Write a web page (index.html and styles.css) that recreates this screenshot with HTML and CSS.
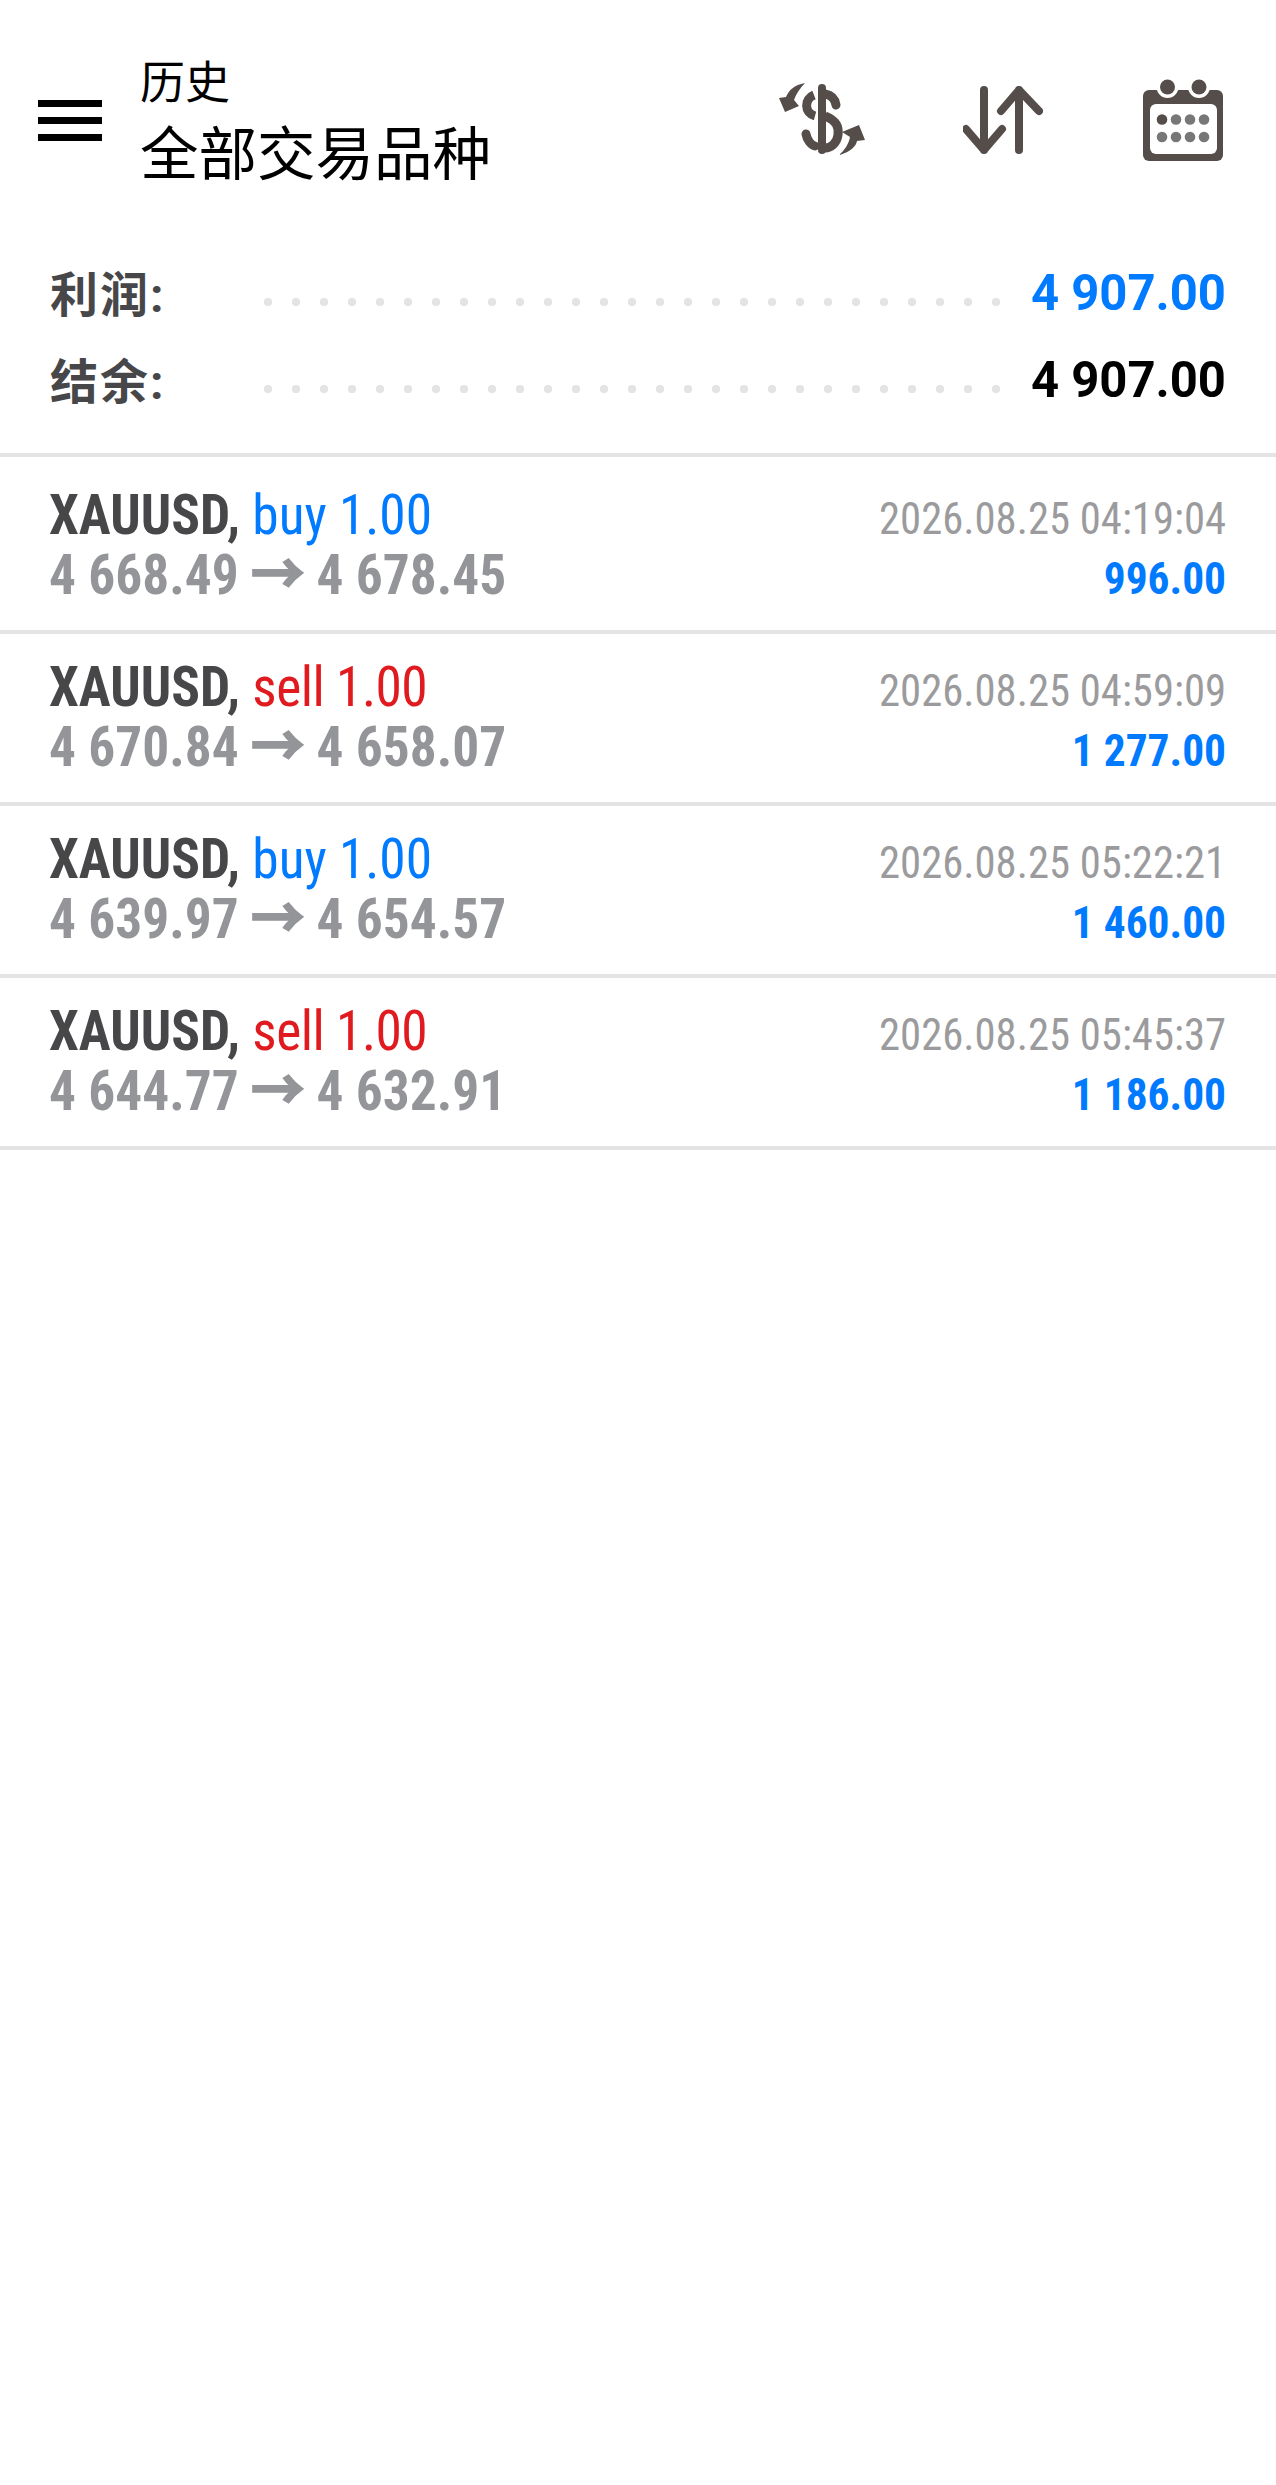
FILE: index.html
```html
<!DOCTYPE html>
<html lang="zh-CN">
<head>
    <meta charset="UTF-8">
    <meta name="viewport" content="width=device-width, initial-scale=1.0">
    <title>历史</title>
    <link rel="stylesheet" href="styles.css">
</head>
<body>
    <header class="toolbar">
        <div class="menu-btn"><span></span><span></span><span></span></div>
        <div class="title">
            <div class="title-small">历史</div>
            <div class="title-big">全部交易品种</div>
        </div>
        <svg class="icon icon-money" viewBox="18 20 86 74">
            <rect x="57" y="21" width="8" height="70" rx="4"/>
            <path class="line" d="M53 32C43 36 43 50 54 53"/>
            <path class="line" d="M64 31C70 32 74 36 75 42" stroke-linecap="round"/>
            <path class="line" d="M64 53C76 58 78 64 77 72C76 80 70 85 64 85"/>
            <path class="line" d="M45 71C46 77 50 82 54 83" stroke-linecap="round"/>
            <path d="M44 20C33 22 28 27 25 34L18 35L24 49L38 43L33 37C35 31 39 25 44 20Z"/>
            <path d="M78 92C90 89 95 83 96 78L104 77L98 62L81 69L89 74C88 80 84 87 78 92Z"/>
        </svg>
        <svg class="icon icon-sort" viewBox="0 0 80 68">
            <path class="line round" d="M21 4V64M3 43L21 64L39 43"/>
            <path class="line round" d="M56 64V4M38 25L56 4L76 25"/>
        </svg>
        <svg class="icon icon-cal" viewBox="13 12 81 84">
            <rect x="13" y="24" width="80" height="71" rx="6"/>
            <circle cx="37.5" cy="21" r="11" fill="#fff"/>
            <circle cx="69" cy="21" r="11" fill="#fff"/>
            <circle cx="37.5" cy="21" r="7.5"/>
            <circle cx="69" cy="21" r="7.5"/>
            <rect x="20" y="38" width="67" height="50" rx="6" fill="#fff"/>
            <circle cx="32" cy="53.5" r="5.3"/>
            <g fill="#777">
                <circle cx="46" cy="53.5" r="5.3"/>
                <circle cx="60" cy="53.5" r="5.3"/>
                <circle cx="74" cy="53.5" r="5.3"/>
                <circle cx="32" cy="71" r="5.3"/>
                <circle cx="46" cy="71" r="5.3"/>
                <circle cx="60" cy="71" r="5.3"/>
                <circle cx="74" cy="71" r="5.3"/>
            </g>
        </svg>
    </header>

    <section class="summary">
        <div class="summary-row">
            <span class="summary-label">利润:</span>
            <span class="dots"></span>
            <span class="summary-value blue">4 907.00</span>
        </div>
        <div class="summary-row">
            <span class="summary-label">结余:</span>
            <span class="dots"></span>
            <span class="summary-value">4 907.00</span>
        </div>
    </section>

    <ul class="deals">
        <li class="deal">
            <div class="deal-left">
                <div class="deal-head"><b>XAUUSD,</b> <span class="blue">buy 1.00</span></div>
                <div class="deal-prices">4 668.49 <span class="arrow">→</span> 4 678.45</div>
            </div>
            <div class="deal-right">
                <div class="deal-time">2026.08.25 04:19:04</div>
                <div class="deal-profit blue">996.00</div>
            </div>
        </li>
        <li class="deal">
            <div class="deal-left">
                <div class="deal-head"><b>XAUUSD,</b> <span class="red">sell 1.00</span></div>
                <div class="deal-prices">4 670.84 <span class="arrow">→</span> 4 658.07</div>
            </div>
            <div class="deal-right">
                <div class="deal-time">2026.08.25 04:59:09</div>
                <div class="deal-profit blue">1 277.00</div>
            </div>
        </li>
        <li class="deal">
            <div class="deal-left">
                <div class="deal-head"><b>XAUUSD,</b> <span class="blue">buy 1.00</span></div>
                <div class="deal-prices">4 639.97 <span class="arrow">→</span> 4 654.57</div>
            </div>
            <div class="deal-right">
                <div class="deal-time">2026.08.25 05:22:21</div>
                <div class="deal-profit blue">1 460.00</div>
            </div>
        </li>
        <li class="deal">
            <div class="deal-left">
                <div class="deal-head"><b>XAUUSD,</b> <span class="red">sell 1.00</span></div>
                <div class="deal-prices">4 644.77 <span class="arrow">→</span> 4 632.91</div>
            </div>
            <div class="deal-right">
                <div class="deal-time">2026.08.25 05:45:37</div>
                <div class="deal-profit blue">1 186.00</div>
            </div>
        </li>
    </ul>
</body>
</html>
```

FILE: styles.css
```css
body {
    margin: 0;
    background: #fff;
    font-family: Roboto, "Noto Sans CJK SC", sans-serif;
}
.blue {
    color: #007aff;
}
.red {
    color: #e01b1f;
    letter-spacing: -0.5px;
}
.toolbar {
    display: flex;
    align-items: center;
    height: 236px;
    padding: 4px 52px 0 38px;
    box-sizing: border-box;
}
.menu-btn {
    display: flex;
    flex-direction: column;
    gap: 10px;
    width: 64px;
    margin-right: 38px;
}
.menu-btn span {
    height: 7px;
    background: #000;
}
.title {
    flex: 1;
    font-family: "Noto Sans CJK SC", sans-serif;
    color: #000;
}
.title-small {
    font-size: 45px;
    line-height: 60px;
}
.title-big {
    font-size: 58.5px;
    line-height: 80px;
}
.icon {
    fill: #544d4a;
    flex: none;
}
.line {
    fill: none;
    stroke: #544d4a;
    stroke-width: 9;
}
.round {
    stroke-linecap: round;
    stroke-linejoin: round;
    stroke-width: 8;
}
.icon-money {
    width: 86px;
    height: 74px;
}
.icon-sort {
    width: 80px;
    height: 68px;
    margin-left: 98px;
}
.icon-cal {
    width: 81px;
    height: 84px;
    margin-left: 100px;
}
.summary {
    padding: 13px 50px 0;
    height: 221px;
    box-sizing: border-box;
    border-bottom: 4px solid #e4e4e4;
}
.summary-row {
    display: flex;
    align-items: center;
    height: 87px;
}
.summary-label {
    width: 204px;
    flex: none;
    margin-top: -4px;
    font-size: 48px;
    font-weight: 700;
    letter-spacing: 2px;
    color: #47474a;
}
.dots {
    flex: 1;
    height: 10px;
    margin-top: 18px;
    background-image: radial-gradient(circle, #e4e4e4 4px, transparent 4.5px);
    background-size: 28px 10px;
}
.summary-value {
    width: 216px;
    flex: none;
    text-align: right;
    font-size: 50px;
    font-weight: 700;
    transform: scaleX(.98);
    transform-origin: right;
}
.deals {
    list-style: none;
    margin: 5px 0 0;
    padding: 0;
}
.deal {
    display: flex;
    justify-content: space-between;
    height: 172px;
    padding: 0 50px 0 49px;
    box-sizing: border-box;
    border-bottom: 4px solid #e4e4e4;
    font-stretch: 75%;
}
.deal-left {
    padding-top: 23px;
    transform: scaleX(.953);
    transform-origin: left;
}
.deal-head {
    font-size: 56px;
    line-height: 60px;
    color: #47474a;
}
.deal-prices {
    font-size: 56px;
    line-height: 60px;
    font-weight: 700;
    color: #939598;
}
.arrow {
    -webkit-text-stroke: 2px #939598;
}
.deal-right {
    padding-top: 27px;
    text-align: right;
}
.deal-time {
    font-size: 45px;
    line-height: 60px;
    color: #9b9b9e;
    transform: scaleX(.948);
    transform-origin: right;
}
.deal-profit {
    font-size: 45px;
    line-height: 60px;
    font-weight: 700;
    transform: scaleX(.965);
    transform-origin: right;
}
```
